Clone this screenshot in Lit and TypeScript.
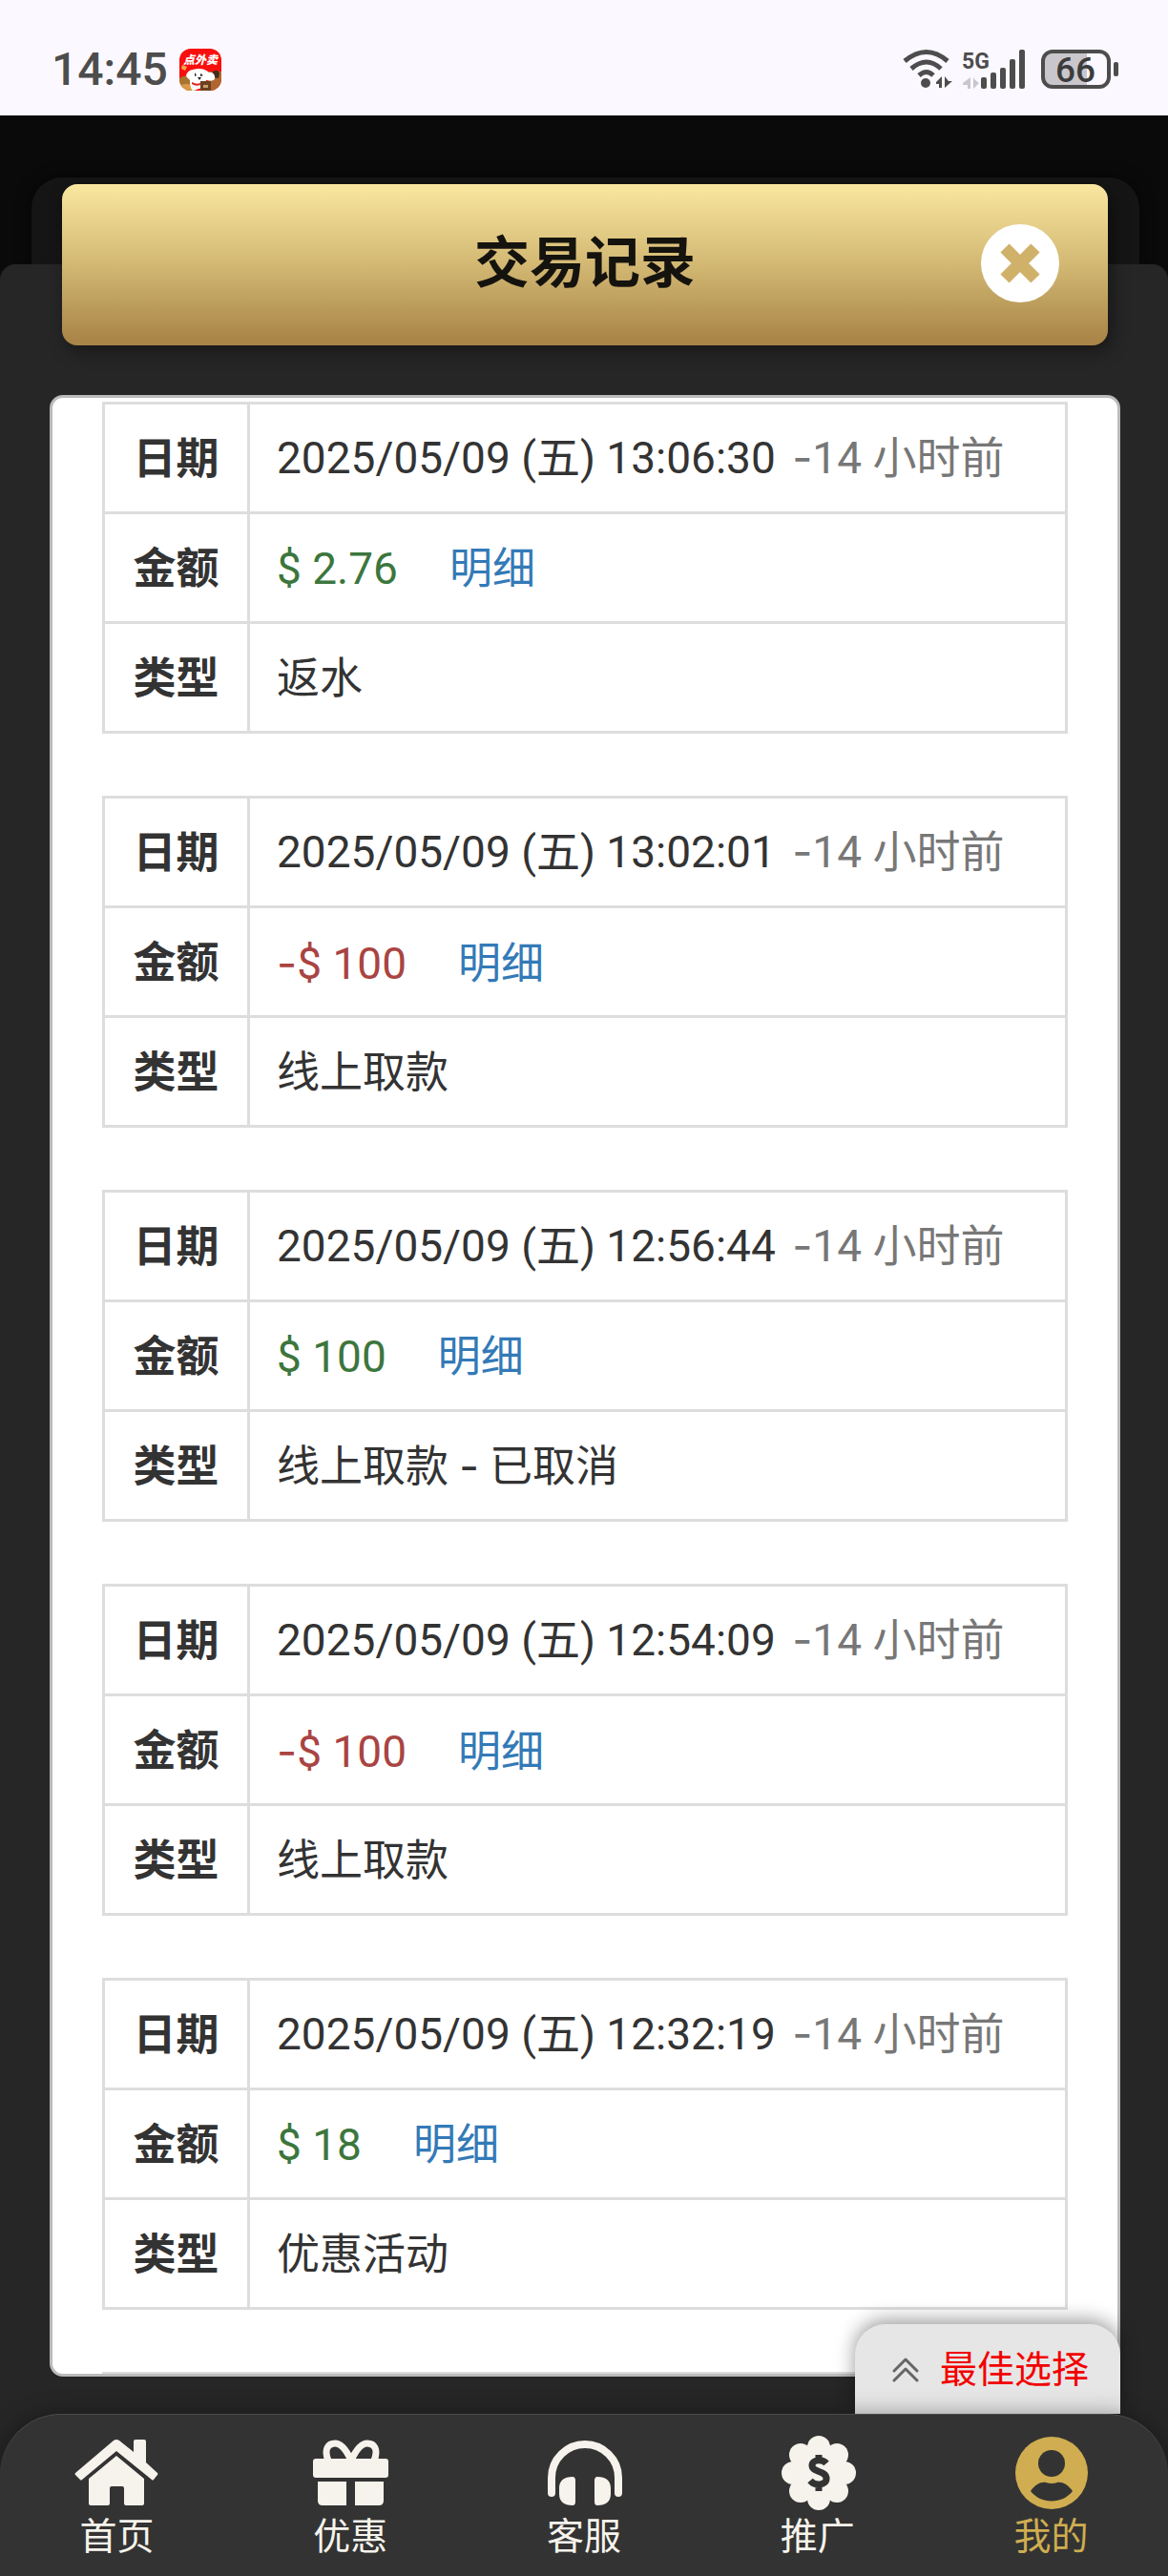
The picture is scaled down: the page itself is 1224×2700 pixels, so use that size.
import { LitElement, html, css, svg } from "lit";
import { customElement, property } from "lit/decorators.js";
import { classMap } from "lit/directives/class-map.js";

interface Transaction {
  date: string;
  ago: string;
  amount: string;
  negative?: boolean;
  type: string;
}

const TRANSACTIONS: Transaction[] = [
  { date: "2025/05/09 (五) 13:06:30", ago: "-14 小时前", amount: "$ 2.76", type: "返水" },
  { date: "2025/05/09 (五) 13:02:01", ago: "-14 小时前", amount: "-$ 100", negative: true, type: "线上取款" },
  { date: "2025/05/09 (五) 12:56:44", ago: "-14 小时前", amount: "$ 100", type: "线上取款 - 已取消" },
  { date: "2025/05/09 (五) 12:54:09", ago: "-14 小时前", amount: "-$ 100", negative: true, type: "线上取款" },
  { date: "2025/05/09 (五) 12:32:19", ago: "-14 小时前", amount: "$ 18", type: "优惠活动" },
];

@customElement("status-bar")
class StatusBar extends LitElement {
  static styles = css`
    :host { display: block; }
    .bar {
      display: flex;
      align-items: center;
      justify-content: space-between;
      height: 121px;
      padding: 24px 51px 0 54px;
      box-sizing: border-box;
      background: #fbf9ff;
      color: #4d4d4d;
    }
    .left { display: flex; align-items: center; gap: 12px; }
    .right { display: flex; align-items: center; gap: 11px; }
    .time { font-size: 48px; line-height: 48px; font-weight: 500; }
    svg { display: block; overflow: visible; }
    .battery { margin-left: 5px; }
    .net { font: 700 23px Roboto, "Liberation Sans", sans-serif; }
    .level { font: 500 37px Roboto, "Liberation Sans", sans-serif; }
    .app { font: italic 900 12px "Noto Sans CJK SC", sans-serif; }
  `;

  render() {
    return html`
      <div class="bar">
        <div class="left">
          <span class="time">14:45</span>
          <svg width="44" height="44" viewBox="0 0 44 44" aria-hidden="true">
            <defs><clipPath id="app"><rect width="44" height="44" rx="12" /></clipPath></defs>
            <g clip-path="url(#app)">
              <rect width="44" height="44" fill="#f8100f" />
              <path d="M0 31c6-4 14-3 18 2v11H0z" fill="#a8752f" />
              <path d="M30 24h14v20H28z" fill="#b0672f" />
              <path d="M2 38c5-2 10-1 14 2v4H0z" fill="#d99a45" />
              <path d="M34 25c3-3 7-3 8 1l-1 5-7-1z" fill="#4a2a1c" />
              <path d="M3 17l5 2-2 4-4-2z" fill="#f0a848" />
              <path d="M9 31c-4-2-1-8 5-9 7-2 13-1 17 3 4-1 7 3 6 7-3 3-7 1-9 1l-1 7-13 4c-3-3-3-8-3-11z" fill="#fff" />
              <path d="M16 25l2 3-2 1zM22 26l3 2-3 1zM19 30h4l-2 3z" fill="#222" />
              <path d="M13 35q5 3 9 1v2q-5 2-9-1z" fill="#e02020" />
              <path d="M22 34h11v10H22z" fill="#6d4020" />
              <path d="M25 38h5v3h-5z" fill="#c9a070" />
              <text class="app" x="4" y="16" fill="#fff">点外卖</text>
            </g>
          </svg>
        </div>
        <div class="right">
          <svg width="51" height="42" viewBox="0 0 51 42" fill="none" stroke="#4d4d4d" role="img" aria-label="Wi-Fi">
            <path d="M2 12Q25-7 47 12" stroke-width="5" />
            <path d="M9 20Q25 6 40 20" stroke-width="5" />
            <path d="M17 27Q25 20 32 27" stroke-width="5" />
            <circle cx="24" cy="35" r="5" fill="#4d4d4d" stroke="none" />
            <path d="M41 28v12h-3v-4h-3v-2zM44 28v12l8-7h-4z" fill="#4d4d4d" stroke="none" />
          </svg>
          <svg width="67" height="42" viewBox="0 0 67 42" fill="#4d4d4d" role="img" aria-label="5G">
            <text class="net" x="0" y="20">5G</text>
            <path d="M9 29v12h-3v-4H1v-2zM12 29v12l6-6-4-3z" fill="#c9c7cc" />
            <rect x="20" y="29" width="6" height="12" rx="2" />
            <rect x="30" y="24" width="6" height="17" rx="2" />
            <rect x="40" y="19" width="6" height="22" rx="2" />
            <rect x="50" y="10" width="6" height="31" rx="2" />
            <rect x="60" y="0" width="6" height="41" rx="2" />
          </svg>
          <svg class="battery" width="82" height="42" viewBox="0 0 82 42" role="img" aria-label="66%">
            <path d="M10 2h38v37H10q-8 0-8-9V11q0-9 8-9z" fill="#c9c7cc" />
            <rect x="2" y="2" width="69" height="37" rx="10" fill="none" stroke="#4d4d4d" stroke-width="4" />
            <rect x="76" y="13" width="5" height="15" rx="2" fill="#4d4d4d" />
            <text class="level" x="36" y="34" text-anchor="middle" fill="#3c3c3c">66</text>
          </svg>
        </div>
      </div>
    `;
  }
}

/** Sets each hyphen in a face with a wide, raised dash. */
const dashed = (text: string) =>
  text.split(/(-)/).map((part) => (part === "-" ? html`<span class="dash">-</span>` : part));

@customElement("transaction-card")
class TransactionCard extends LitElement {
  @property({ attribute: false }) item!: Transaction;

  static styles = css`
    :host { display: block; }
    .record {
      width: 100%;
      border-collapse: collapse;
      background: #fff;
    }
    th, td {
      height: 109px;
      padding: 3px 28px 0;
      box-sizing: content-box;
      border: 3px solid #ddd;
      text-align: left;
      vertical-align: middle;
      white-space: nowrap;
      line-height: 64px;
    }
    th { width: 93px; text-align: center; font-weight: 700; }
    td { font-weight: 400; }
    .date { padding: 1px 28px 2px; }
    .date, .amount { font-size: 46px; }
    .dash { font-family: Inter, sans-serif; }
    .ago { margin-left: 6px; color: #777; }
    .amount { color: #3c763d; margin-right: 54px; }
    .negative { color: #a94442; }
    .detail { color: #337ab7; text-decoration: none; }
  `;

  render() {
    const { date, ago, amount, negative = false, type } = this.item;
    return html`
      <table class="record">
        <tr><th scope="row">日期</th><td class="date">${date} <span class="ago">${dashed(ago)}</span></td></tr>
        <tr>
          <th scope="row">金额</th>
          <td><span class=${classMap({ amount: true, negative })}>${dashed(amount)}</span><a class="detail" href="#detail">明细</a></td>
        </tr>
        <tr><th scope="row">类型</th><td>${dashed(type)}</td></tr>
      </table>
    `;
  }
}

const ICONS = {
  home: svg`
    <path d="M1 42q-1-1 0-2L41 6q3-2 6 0L62 18V7q0-2 2-2h9q2 0 2 2v22l12 11q1 1 0 2l-4 5q-1 1-2 0L44 17 8 47q-1 1-2 0z" />
    <path d="M44 22l29 24v26q0 2-2 2H54q-2 0-2-2V56q0-2-2-2H39q-2 0-2 2v16q0 2-2 2H17q-2 0-2-2V46z" />`,
  gift: svg`
    <path d="M21 27c-5-12 0-18 7-18s12 7 17 18c5-11 10-18 17-18s12 6 7 18" fill="none" stroke="currentColor" stroke-width="7" />
    <rect x="5" y="25" width="79" height="20" rx="3" />
    <path d="M10 49h30v25H15q-5 0-5-5zM49 49h30v20q0 5-5 5H49z" />`,
  headset: svg`
    <path d="M10 61V45a35 35 0 0 1 70 0V61" fill="none" stroke="currentColor" stroke-width="8" stroke-linecap="round" />
    <path d="M32 44q3 0 3 4v22q0 4-3 4c-9 0-14-4-14-12v-6c0-8 5-12 14-12zM58 44q-3 0-3 4v22q0 4 3 4c9 0 14-4 14-12v-6c0-8-5-12-14-12z" />`,
  promo: svg`
    <g transform="translate(1 1)">
      <circle cx="44" cy="39" r="30" />
      <circle cx="44" cy="12" r="12" /><circle cx="63" cy="20" r="12" />
      <circle cx="71" cy="39" r="12" /><circle cx="63" cy="58" r="12" />
      <circle cx="44" cy="66" r="12" /><circle cx="25" cy="58" r="12" />
      <circle cx="17" cy="39" r="12" /><circle cx="25" cy="20" r="12" />
      <path d="M52 29c-4-5-15-4-15 2 0 8 15 5 15 14 0 7-12 8-17 2M44 20v7M44 51v7" fill="none" stroke="#333" stroke-width="7" />
    </g>`,
  user: svg`
    <circle cx="44" cy="40" r="38" />
    <circle cx="44" cy="30" r="14" fill="#333" />
    <path d="M22 59c5-7 11-10 16-9q6 2 12 0c5-1 11 2 16 9-11 14-33 14-44 0z" fill="#333" />`,
};

const TABS = [
  { label: "首页", icon: ICONS.home },
  { label: "优惠", icon: ICONS.gift },
  { label: "客服", icon: ICONS.headset },
  { label: "推广", icon: ICONS.promo },
  { label: "我的", icon: ICONS.user, active: true },
];

@customElement("tab-bar")
class TabBar extends LitElement {
  static styles = css`
    :host { display: block; }
    .tabs {
      display: grid;
      grid-template-columns: repeat(5, 1fr);
      height: 170px;
      padding-top: 22px;
      box-sizing: border-box;
      border-radius: 64px 64px 0 0;
      background: #333;
      box-shadow: 0 0 24px rgba(0, 0, 0, 0.35), inset 0 1px 0 rgba(255, 255, 255, 0.12);
    }
    .tab {
      display: flex;
      flex-direction: column;
      align-items: center;
      gap: 3px;
      color: #f6f3ec;
      font-size: 39px;
      line-height: 48px;
      text-decoration: none;
    }
    .active { color: #cfad50; }
    svg { display: block; width: 88px; height: 80px; fill: currentColor; }
  `;

  render() {
    return html`
      <nav class="tabs">
        ${TABS.map(
          (t) => html`
            <a class=${classMap({ tab: true, active: !!t.active })} href="#">
              <svg viewBox="0 0 88 80" aria-hidden="true">${t.icon}</svg>
              <span>${t.label}</span>
            </a>
          `,
        )}
      </nav>
    `;
  }
}

@customElement("app-root")
class AppRoot extends LitElement {
  static styles = css`
    :host {
      display: flex;
      flex-direction: column;
      height: 100vh;
      overflow: hidden;
      background: #0a0a0a;
      color: #333;
      font-family: Roboto, "Noto Sans CJK SC", sans-serif;
      font-size: 45px;
    }
    .stage {
      flex: 1;
      min-height: 0;
      display: grid;
      grid-template-rows: 65px 91px 1fr;
      grid-template-columns: 33px 1fr 30px;
    }
    .back {
      grid-area: 2 / 2 / 4 / 3;
      border-radius: 32px 32px 0 0;
      background: #151515;
      box-shadow: 0 0 16px rgba(0, 0, 0, 0.5);
    }
    .sheet {
      grid-area: 3 / 1 / 4 / 4;
      border-radius: 16px 16px 0 0;
      background: #262626;
    }
    .content {
      grid-area: 2 / 1 / 4 / 4;
      display: flex;
      flex-direction: column;
      min-height: 0;
      padding: 7px 50px 39px 52px;
    }
    .header {
      display: grid;
      grid-template-columns: 82px 1fr 82px;
      align-items: center;
      flex: none;
      height: 169px;
      margin: 0 13px 52px;
      padding: 0 51px 4px;
      box-sizing: border-box;
      border-radius: 16px;
      background: linear-gradient(#fae79f, #d2b873 50%, #a98548 97%);
      box-shadow: 4px 6px 18px rgba(0, 0, 0, 0.4);
    }
    .title {
      grid-column: 2;
      margin: 0;
      color: #15130e;
      font-size: 58px;
      line-height: 80px;
      text-align: center;
    }
    .close { padding: 0; border: 0; background: none; cursor: pointer; }
    .close svg { display: block; width: 82px; height: 82px; }
    .panel {
      flex: 1;
      min-height: 0;
      display: flex;
      flex-direction: column;
      gap: 65px;
      padding: 4px 52px 0;
      overflow: hidden;
      border: 3px solid #bbb;
      border-radius: 14px;
      background: #fff;
    }
    .next { flex: none; height: 3px; background: #ddd; }
    .footer { position: relative; background: #262626; }
    .best {
      position: absolute;
      right: 50px;
      bottom: 100%;
      display: flex;
      align-items: center;
      gap: 22px;
      height: 94px;
      padding: 2px 33px 0 39px;
      border: 0;
      border-radius: 32px 32px 0 0;
      background: #e6e6e6;
      box-shadow: 0 -4px 20px rgba(0, 0, 0, 0.4);
      color: #f20000;
      font-family: inherit;
      font-size: 39px;
      line-height: 48px;
    }
    .best svg { width: 28px; height: 28px; }
    tab-bar { position: relative; }
  `;

  render() {
    return html`
      <status-bar></status-bar>
      <main class="stage">
        <div class="back"></div>
        <div class="sheet"></div>
        <div class="content">
          <header class="header">
            <h1 class="title">交易记录</h1>
            <button class="close" aria-label="关闭">
              <svg viewBox="0 0 82 82" aria-hidden="true">
                <circle cx="41" cy="41" r="41" fill="#fff" />
                <path d="M25 25l32 32M57 25L25 57" stroke="#d0b16a" stroke-width="13" />
              </svg>
            </button>
          </header>
          <section class="panel">
            ${TRANSACTIONS.map((t) => html`<transaction-card .item=${t}></transaction-card>`)}
            <div class="next"></div>
          </section>
        </div>
      </main>
      <footer class="footer">
        <button class="best">
          <svg viewBox="0 0 28 28" fill="none" stroke="#666" stroke-width="3" stroke-linecap="round" stroke-linejoin="round" aria-hidden="true">
            <path d="M2 15L14 3l12 12M2 25l12-12 12 12" />
          </svg>
          最佳选择
        </button>
        <tab-bar></tab-bar>
      </footer>
    `;
  }
}
